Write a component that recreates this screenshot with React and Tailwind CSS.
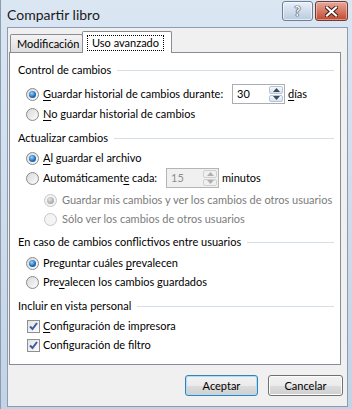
import clsx from 'clsx'

const FONT = "font-['Lato','Liberation_Sans',sans-serif]"

function Radio({ checked, disabled }) {
  return (
    <span
      className={clsx(
        'w-[13px] h-[13px] rounded-full border flex items-center justify-center shrink-0',
        disabled
          ? 'border-[#c6c6c6] bg-[#f4f4f4]'
          : 'border-[#8a8a8a] bg-gradient-to-br from-[#d9d9d9] to-[#fcfcfc]'
      )}
    >
      {checked && (
        <span
          className={clsx(
            'w-[7px] h-[7px] rounded-full',
            disabled
              ? 'bg-[radial-gradient(circle_at_40%_35%,#e4e4e4,#a8a8a8_70%)]'
              : 'bg-[radial-gradient(circle_at_40%_35%,#9ad8ff,#1f6fbb_55%,#0c4682)]'
          )}
        />
      )}
    </span>
  )
}

function Check() {
  return (
    <span className="w-[13px] h-[13px] border border-[#8f8f8f] bg-gradient-to-br from-[#e3e3e3] to-[#fbfbfb] flex items-center justify-center shrink-0">
      <svg width="11" height="11" viewBox="0 0 11 11">
        <path d="M2 5.5 L4.5 8 L9 2" fill="none" stroke="#3d5a9b" strokeWidth="2" />
      </svg>
    </span>
  )
}

function Arrow({ up, disabled }) {
  return (
    <span
      className={clsx(
        'flex-1 rounded-[2px] border flex items-center justify-center',
        disabled
          ? 'border-[#d0d0d0] bg-[#f0f0f0]'
          : 'border-[#b6c4d6] bg-gradient-to-b from-[#f4f8fc] to-[#d8e4f1]'
      )}
    >
      <svg width="7" height="4" viewBox="0 0 7 4">
        <path d={up ? 'M0 4 L3.5 0 L7 4 Z' : 'M0 0 L3.5 4 L7 0 Z'} fill={disabled ? '#b0b0b0' : '#3c4a5e'} />
      </svg>
    </span>
  )
}

function Spin({ value, disabled }) {
  return (
    <div
      className={clsx(
        'w-[53px] h-[20px] border flex shrink-0',
        disabled ? 'border-[#b5b5b5] bg-[#f0f0f0] text-[#8d8d8d]' : 'border-[#abadb3] bg-white'
      )}
    >
      <span className="flex-1 pl-[4px] leading-[18px]">{value}</span>
      <div className="w-[16px] flex flex-col gap-[1px] p-[1px]">
        <Arrow up disabled={disabled} />
        <Arrow disabled={disabled} />
      </div>
    </div>
  )
}

function Heading({ children, className }) {
  return (
    <div className={clsx('h-[20px] flex items-center pl-[8px] pr-[6px]', className)}>
      <span className="whitespace-nowrap">{children}</span>
      <span className="flex-1 h-px bg-[#d5dfe5] ml-[6px]" />
    </div>
  )
}

function Option({ checked, disabled, sub, className, children }) {
  return (
    <div className={clsx('h-[20px] flex items-center', sub ? 'pl-[34px] gap-[5px]' : 'pl-[16px] gap-[4px]', className)}>
      <Radio checked={checked} disabled={disabled} />
      <span className={clsx('whitespace-nowrap', disabled && 'text-[#7c7c7c]')}>{children}</span>
    </div>
  )
}

function U({ children }) {
  return <span className="underline underline-offset-2 decoration-1">{children}</span>
}

export default function App() {
  return (
    <div className={clsx('w-[352px] h-[409px] flex flex-col text-[11px] text-black bg-gradient-to-b from-[#dbe6f3] to-[#c3d3e6] border-l border-[#8d9db0]', FONT)}>
      <div className="h-[27px] flex items-start justify-between pl-[6px] pr-[4px]">
        <span className="text-[14px] mt-[4px] text-[#1a1a1a] whitespace-nowrap">Compartir libro</span>
        <div className="flex gap-[2px] mt-[1px]">
          <div className="w-[31px] h-[20px] rounded-[3px] border border-[#6e7f94] bg-gradient-to-b from-[#e9f0f8] to-[#b9cbe0] flex items-center justify-center shadow-[inset_0_0_0_1px_rgba(255,255,255,0.6)]">
            <span className="text-[13px] font-bold text-white [text-shadow:0_0_1px_#1e2b3c,0_0_1px_#1e2b3c,0_0_1px_#1e2b3c] leading-none">?</span>
          </div>
          <div className="w-[33px] h-[20px] rounded-[3px] border border-[#6b3a33] bg-gradient-to-b from-[#e6a99b] to-[#c2452c] flex items-center justify-center shadow-[inset_0_0_0_1px_rgba(255,220,210,0.5)]">
            <svg width="13" height="11" viewBox="0 0 13 11">
              <path d="M2 1.5 L11 9.5 M11 1.5 L2 9.5" stroke="#3a1a14" strokeWidth="4" strokeLinecap="square" />
              <path d="M2 1.5 L11 9.5 M11 1.5 L2 9.5" stroke="#ffffff" strokeWidth="2.2" strokeLinecap="square" />
            </svg>
          </div>
        </div>
      </div>

      <div className="flex-1 ml-[6px] mr-[4px] mb-[2px] bg-[#f0f0f0] border border-[#8b9bb0] flex flex-col">
        <div className="flex items-end pl-[2px] pt-[3px] h-[25px] relative z-10">
          <div className="h-[18px] w-[73px] border border-b-0 border-[#898c95] rounded-t-[2px] bg-gradient-to-b from-[#f4f4f4] to-[#dedede] pl-[6px] leading-[17px] mb-[1px] whitespace-nowrap">
            Modificación
          </div>
          <div className="h-[22px] w-[90px] -ml-px border border-b-0 border-[#898c95] rounded-t-[2px] bg-white flex items-start pt-[3px] pl-[4px]">
            <span className="border border-dotted border-black px-[4px] leading-[14px] whitespace-nowrap">Uso avanzado</span>
          </div>
        </div>

        <div className="ml-[1px] w-[332px] h-[313px] -mt-px border border-[#898c95] bg-white pt-[7px]">
          <Heading>Control de cambios</Heading>
          <div className="h-[20px] mt-[4px] flex items-center pl-[16px]">
            <Radio checked />
            <span className="w-[193px] pl-[4px] whitespace-nowrap">
              <U>G</U>uardar historial de cambios durante:
            </span>
            <Spin value="30" />
            <span className="ml-[3px]">
              <U>d</U>ías
            </span>
          </div>
          <Option>
            <U>N</U>o guardar historial de cambios
          </Option>

          <Heading className="mt-[4px]">Actualizar cambios</Heading>
          <Option checked>
            <U>A</U>l guardar el archivo
          </Option>
          <div className="h-[20px] flex items-center pl-[16px]">
            <Radio />
            <span className="w-[127px] pl-[4px] whitespace-nowrap">
              Automáticament<U>e</U> cada:
            </span>
            <Spin value="15" disabled />
            <span className="ml-[3px]">minutos</span>
          </div>
          <Option sub checked disabled className="mt-[2px]">
            Guardar mis cambios y ver los cambios de otros usuarios
          </Option>
          <Option sub disabled className="-mt-px">
            Sólo ver los cambios de otros usuarios
          </Option>

          <Heading className="mt-[3px]">En caso de cambios conflictivos entre usuarios</Heading>
          <Option checked className="mt-[1px]">
            Preguntar cuáles <U>p</U>revalecen
          </Option>
          <Option className="-mt-px">
            Pre<U>v</U>alecen los cambios guardados
          </Option>

          <Heading className="mt-[4px]">Incluir en vista personal</Heading>
          <div className="h-[20px] flex items-center pl-[17px] gap-[3px]">
            <Check />
            <span className="whitespace-nowrap">
              <U>C</U>onfiguración de impresora
            </span>
          </div>
          <div className="h-[20px] -mt-px flex items-center pl-[17px] gap-[3px]">
            <Check />
            <span className="whitespace-nowrap">Configuración de filtro</span>
          </div>
        </div>

        <div className="flex justify-end gap-[10px] pr-[4px] mt-[10px]">
          <button className="w-[73px] h-[21px] rounded-[3px] border border-[#3c7fb1] bg-[linear-gradient(#f2f2f2,#ebebeb_50%,#dddddd_50%,#cfcfcf)] shadow-[inset_0_0_0_1px_#a6e0fb] leading-[19px]">
            Aceptar
          </button>
          <button className="w-[75px] h-[21px] rounded-[3px] border border-[#707070] bg-[linear-gradient(#f2f2f2,#ebebeb_50%,#dddddd_50%,#cfcfcf)] shadow-[inset_0_0_0_1px_#fcfcfc] leading-[19px]">
            Cancelar
          </button>
        </div>
      </div>
    </div>
  )
}
